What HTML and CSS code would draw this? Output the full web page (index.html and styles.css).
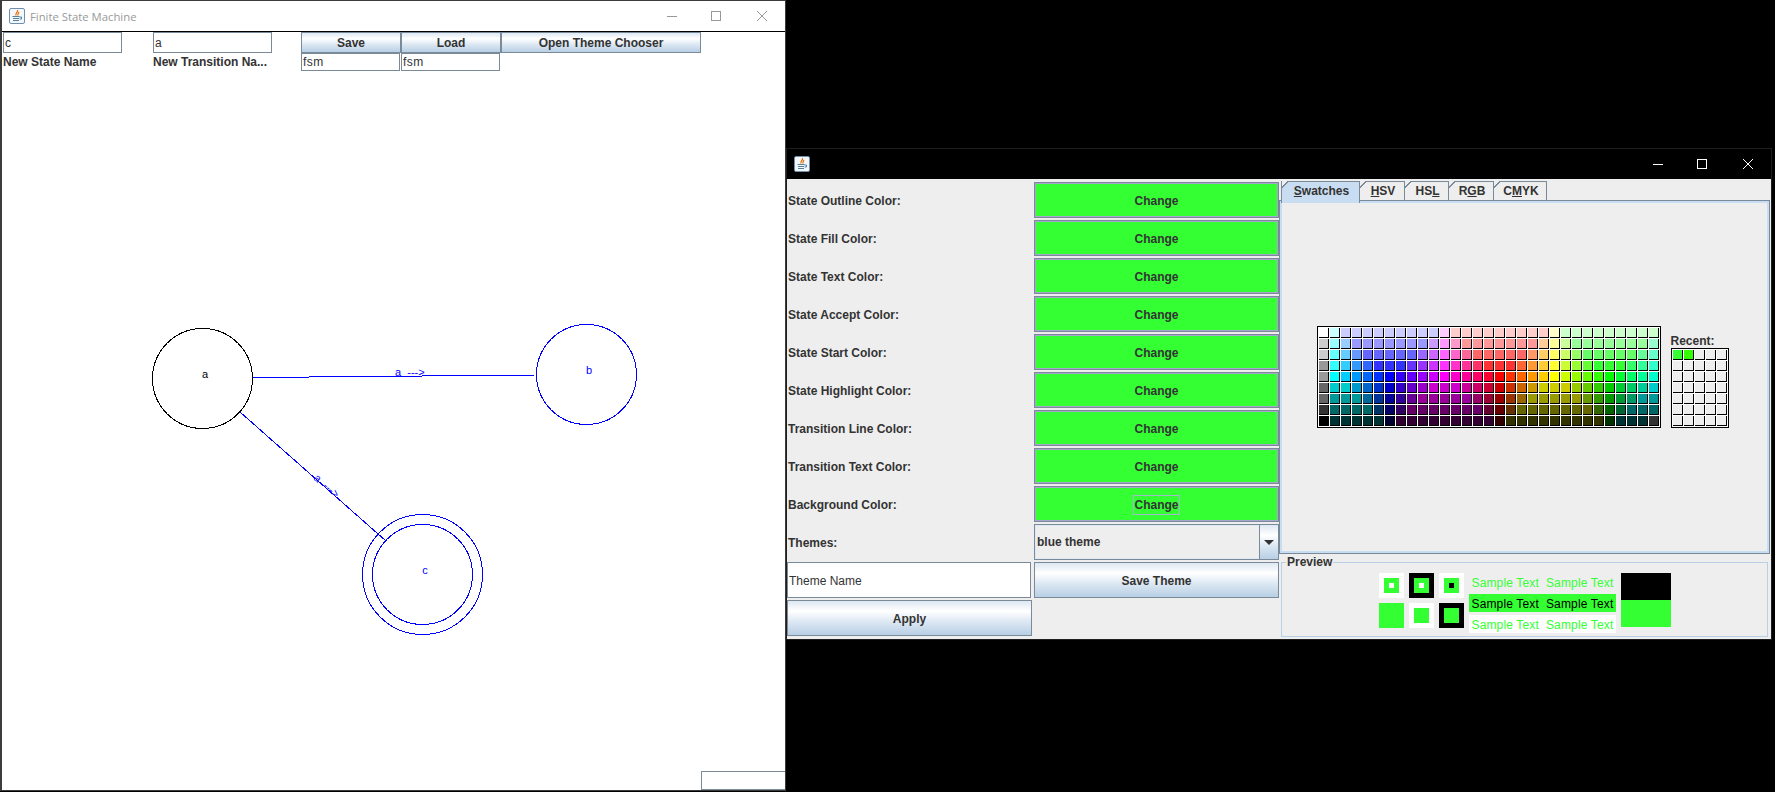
FILE: index.html
```html
<!DOCTYPE html>
<html lang="en">
<head>
    <meta charset="UTF-8">
    <meta name="viewport" content="width=device-width, initial-scale=1.0">
    <title>Finite State Machine</title>
    <link rel="stylesheet" href="styles.css">
</head>
<body>

<svg class="icon-defs" width="0" height="0">
    <symbol id="javaIcon" viewBox="0 0 16 16">
        <rect x="0.5" y="0.5" width="15" height="15" rx="1.5" fill="#f4f8fc" stroke="#6f8fae"/>
        <path d="M8.5 2 C9.5 4 6 5 7 7.5 M10 4 C9 5.5 8.5 6 9 7.5" fill="none" stroke="#e76f00" stroke-width="1.2"/>
        <path d="M3.5 8.5 H10.5 M4 10.5 H10 M4 12.5 H10 M10.5 9 H12.5 V11 H10.5" fill="none" stroke="#5382a1" stroke-width="1"/>
    </symbol>
</svg>

<!-- main window -->
<div class="window fsm-window">
    <div class="titlebar">
        <svg class="app-icon"><use href="#javaIcon"/></svg>
        <span class="title-text">Finite State Machine</span>
        <div class="win-controls">
            <svg class="win-btn" viewBox="0 0 10 10"><path d="M0 5.5 H10"/></svg>
            <svg class="win-btn" viewBox="0 0 10 10"><rect x="0.5" y="0.5" width="9" height="9"/></svg>
            <svg class="win-btn" viewBox="0 0 10 10"><path d="M0 0 L10 10 M10 0 L0 10"/></svg>
        </div>
    </div>

    <div class="fsm-body">
        <div class="toolbar">
            <input class="field field-top" type="text" value="c">
            <span></span>
            <input class="field field-top" type="text" value="a">
            <span></span>
            <button class="btn">Save</button>
            <button class="btn">Load</button>
            <button class="btn">Open Theme Chooser</button>

            <label class="label">New State Name</label>
            <span></span>
            <label class="label">New Transition Na...</label>
            <span></span>
            <input class="field field-small" type="text" value="fsm">
            <input class="field field-small" type="text" value="fsm">
        </div>

        <svg class="canvas" viewBox="2 71 783 700">
            <line x1="253" y1="377.5" x2="536" y2="375"/>
            <line x1="240" y1="412" x2="386" y2="541"/>
            <circle class="state-start" cx="202.5" cy="378.5" r="50"/>
            <circle cx="586.5" cy="374.5" r="50"/>
            <circle cx="422.5" cy="574.5" r="60"/>
            <circle cx="422.5" cy="574.5" r="50"/>
            <text class="state-start-text" x="205" y="378">a</text>
            <text x="589" y="374">b</text>
            <text x="425" y="574">c</text>
            <text class="edge-text" x="395" y="376">a  ---&gt;</text>
            <text class="edge-text" transform="translate(313 479) rotate(41)">a  ---&gt;</text>
        </svg>

        <div class="status-row">
            <input class="field status-field" type="text">
        </div>
    </div>
</div>

<!-- theme chooser window -->
<div class="window theme-window">
    <div class="titlebar titlebar-dark">
        <svg class="app-icon"><use href="#javaIcon"/></svg>
        <div class="win-controls">
            <svg class="win-btn" viewBox="0 0 10 10"><path d="M0 5.5 H10"/></svg>
            <svg class="win-btn" viewBox="0 0 10 10"><rect x="0.5" y="0.5" width="9" height="9"/></svg>
            <svg class="win-btn" viewBox="0 0 10 10"><path d="M0 0 L10 10 M10 0 L0 10"/></svg>
        </div>
    </div>

    <div class="theme-body">
        <div class="theme-form">
            <label class="label">State Outline Color:</label>
            <button class="btn-color">Change</button>
            <label class="label">State Fill Color:</label>
            <button class="btn-color">Change</button>
            <label class="label">State Text Color:</label>
            <button class="btn-color">Change</button>
            <label class="label">State Accept Color:</label>
            <button class="btn-color">Change</button>
            <label class="label">State Start Color:</label>
            <button class="btn-color">Change</button>
            <label class="label">State Highlight Color:</label>
            <button class="btn-color">Change</button>
            <label class="label">Transition Line Color:</label>
            <button class="btn-color">Change</button>
            <label class="label">Transition Text Color:</label>
            <button class="btn-color">Change</button>
            <label class="label">Background Color:</label>
            <button class="btn-color"><span class="focus-ring">Change</span></button>
            <label class="label">Themes:</label>
            <div class="combo">
                <span class="combo-value">blue theme</span>
                <span class="combo-arrow"></span>
            </div>
            <input class="field theme-name" type="text" value="Theme Name">
            <button class="btn btn-tall">Save Theme</button>
            <button class="btn btn-tall">Apply</button>
        </div>

        <div class="chooser">
            <div class="tabs">
                <div class="tab tab-active"><u>S</u>watches</div>
                <div class="tab"><u>H</u>SV</div>
                <div class="tab">HS<u>L</u></div>
                <div class="tab">R<u>G</u>B</div>
                <div class="tab">C<u>M</u>YK</div>
            </div>
            <div class="tab-panel">
                <div class="swatches" id="mainSwatches"></div>
                <div class="recent">
                    <div class="recent-label">Recent:</div>
                    <div class="swatches swatches-recent" id="recentSwatches"></div>
                </div>
            </div>

            <fieldset class="preview">
                <legend>Preview</legend>
                <div class="preview-squares">
                    <div class="sq sq-white"><div class="sq-mid"><div class="sq-dot"></div></div></div>
                    <div class="sq sq-black"><div class="sq-mid"><div class="sq-dot"></div></div></div>
                    <div class="sq sq-white"><div class="sq-mid"><div class="sq-dot sq-dot-black"></div></div></div>
                    <div class="sq sq-green"></div>
                    <div class="sq sq-white"><div class="sq-mid"></div></div>
                    <div class="sq sq-black"><div class="sq-mid"></div></div>
                </div>
                <div class="preview-text">
                    <div class="sample">Sample Text  Sample Text</div>
                    <div class="sample sample-green">Sample Text  Sample Text</div>
                    <div class="sample sample-white">Sample Text  Sample Text</div>
                </div>
                <div class="preview-block">
                    <div class="block-half block-black"></div>
                    <div class="block-half block-green"></div>
                </div>
            </fieldset>
        </div>
    </div>
</div>

<script src="swatches.js"></script>
</body>
</html>
```

FILE: styles.css
```css
* {
    box-sizing: border-box;
}

html, body {
    margin: 0;
    height: 792px;
    overflow: hidden;
    background-color: #000;
}

body {
    font-family: "Liberation Sans", Arial, sans-serif;
    font-size: 12px;
    color: #333;
}

.icon-defs {
    position: absolute;
}

.window {
    position: absolute;
    display: flex;
    flex-direction: column;
}

.fsm-window {
    left: 0;
    top: 0;
    width: 786px;
    height: 791px;
    background-color: #fff;
    border: 1px solid #3c3c3c;
    border-left-width: 2px;
}

.theme-window {
    left: 786px;
    top: 148px;
    width: 986px;
    height: 492px;
    background-color: #000;
    border: 1px solid #1e1e1e;
}

/* title bars */
.titlebar {
    display: flex;
    align-items: center;
    flex: none;
    height: 31px;
    padding-left: 7px;
    border-bottom: 1px solid #000;
    background-color: #fff;
}

.titlebar-dark {
    height: 30px;
    border-bottom: none;
    background-color: #000;
}

.app-icon {
    width: 16px;
    height: 16px;
    flex: none;
}

.title-text {
    margin-left: 5px;
    font-family: "Open Sans", sans-serif;
    font-size: 11.3px;
    color: #999;
}

.win-controls {
    display: flex;
    gap: 34px;
    margin-left: auto;
    padding-right: 18px;
}

.win-btn {
    width: 10px;
    height: 10px;
    fill: none;
    stroke: #999;
    stroke-width: 1;
}

.win-btn:last-child {
    margin-left: 2px;
}

.titlebar-dark .win-btn {
    stroke: #fff;
}

/* shared controls */
.label {
    display: flex;
    align-items: center;
    font-weight: bold;
    white-space: nowrap;
}

.field {
    min-width: 0;
    width: 100%;
    padding: 0 2px;
    border: 1px solid #7a8a99;
    border-radius: 0;
    outline: none;
    background-color: #fff;
    font-family: inherit;
    font-size: 12px;
    color: #333;
}

.btn {
    padding: 0;
    border: 1px solid #7a8a99;
    background: linear-gradient(#dde8f3 0, #fff 30%, #dde8f3 60%, #b8cfe5 100%);
    font-family: inherit;
    font-size: 12px;
    font-weight: bold;
    color: #333;
}

.btn-tall {
    padding-top: 2px;
}

.btn-color {
    padding: 2px 0 0;
    border: 1px solid #7a8a99;
    box-shadow: inset 0 0 0 1px #a5a5cf;
    background-color: #33ff33;
    font-family: inherit;
    font-size: 12px;
    font-weight: bold;
    color: #333;
}

.focus-ring {
    display: inline-block;
    padding: 2px 0;
    outline: 1px solid #a3b8cc;
}

/* main window */
.fsm-body {
    display: flex;
    flex-direction: column;
    flex: 1;
    min-height: 0;
}

.toolbar {
    display: grid;
    grid-template-columns: 119px 31px 119px 29px 100px 100px 200px;
    grid-template-rows: 21px 18px;
    padding-left: 1px;
    flex: none;
}

.field-top {
    padding: 0 1px;
}

.field-small {
    width: 99px;
    padding: 0 1px;
    letter-spacing: 0.5px;
}

.canvas {
    display: block;
    width: 783px;
    height: 700px;
    flex: none;
    fill: none;
    stroke: #00f;
    shape-rendering: crispEdges;
}

.canvas .state-start {
    stroke: #000;
}

.canvas text {
    fill: #00f;
    stroke: none;
    font-size: 11px;
    text-anchor: middle;
}

.canvas .state-start-text {
    fill: #000;
}

.canvas .edge-text {
    text-anchor: start;
    white-space: pre;
    font-size: 11px;
}

.status-row {
    display: flex;
    justify-content: flex-end;
    flex: none;
}

.status-field {
    width: 84px;
    height: 19px;
    border-right: none;
}

/* theme window */
.theme-body {
    display: flex;
    flex: 1;
    min-height: 0;
    background-color: #eee;
}

.theme-form {
    display: grid;
    grid-template-columns: 245px 245px;
    grid-auto-rows: 36px;
    column-gap: 2px;
    row-gap: 2px;
    align-content: start;
    flex: none;
    width: 492px;
    padding-top: 3px;
}

.theme-form .label {
    padding: 2px 0 0 1px;
}

.theme-name {
    width: 244px;
    height: 36px;
    padding: 2px 1px 0;
}

.combo {
    display: flex;
    border: 1px solid #7a8a99;
    box-shadow: inset 0 0 0 1px #dde8f3;
}

.combo-value {
    display: flex;
    align-items: center;
    flex: 1;
    padding-left: 2px;
    font-weight: bold;
}

.combo-arrow {
    position: relative;
    flex: none;
    width: 19px;
    border-left: 1px solid #7a8a99;
    background: linear-gradient(#dde8f3 0, #fff 30%, #dde8f3 60%, #b8cfe5 100%);
}

.combo-arrow::after {
    content: "";
    position: absolute;
    left: 4px;
    top: 15px;
    border-left: 5px solid transparent;
    border-right: 5px solid transparent;
    border-top: 5px solid #333;
}

/* colour chooser */
.chooser {
    display: flex;
    flex-direction: column;
    flex: 1;
    min-width: 0;
    padding-top: 2px;
}

.tabs {
    display: flex;
    flex: none;
    height: 19px;
    padding-left: 2px;
    position: relative;
    z-index: 1;
}

.tab {
    --tab-fill: #eee;
    display: flex;
    align-items: center;
    justify-content: center;
    height: 19px;
    padding-left: 2px;
    border-right: 1px solid #7a8a99;
    background:
        linear-gradient(#7a8a99, #7a8a99) 6px 0 / 100% 1px no-repeat,
        linear-gradient(135deg, transparent 4px, #7a8a99 4px, #7a8a99 5px, var(--tab-fill) 5px);
    font-weight: bold;
    white-space: nowrap;
}

.tab:nth-child(1) {
    width: 79px;
}

.tab:nth-child(2) {
    width: 45px;
}

.tab:nth-child(3) {
    width: 44px;
}

.tab:nth-child(4) {
    width: 45px;
}

.tab:nth-child(5) {
    width: 53px;
}

.tab-active {
    --tab-fill: #c8ddf2;
    height: 22px;
    padding-bottom: 3px;
    border-left: 1px solid #7a8a99;
}

.tab-panel {
    display: flex;
    align-items: flex-end;
    justify-content: center;
    flex: none;
    height: 354px;
    margin-right: 1px;
    padding: 0 4px 125px 0;
    border: 1px solid #7a8a99;
    box-shadow: inset 0 0 0 2px #c8ddf2;
}

.swatches {
    display: grid;
    grid-template-columns: repeat(31, 10px);
    gap: 1px;
    padding: 1px;
    border: 1px solid #000;
    background-color: #fff;
}

.swatches-recent {
    grid-template-columns: repeat(5, 10px);
}

.swatch {
    width: 10px;
    height: 10px;
    border-right: 1px solid #000;
    border-bottom: 1px solid #000;
}

.recent {
    margin-left: 10px;
}

.recent-label {
    margin-bottom: 0;
    font-weight: bold;
    line-height: 14px;
}

/* preview */
.preview {
    display: flex;
    justify-content: center;
    gap: 5px;
    flex: 1;
    min-width: 0;
    margin: 1px 3px 2px 2px;
    padding: 4px 0 0;
    border: 1px solid #b8cfe5;
}

.preview legend {
    margin-left: 4px;
    padding: 0 1px;
    font-weight: bold;
    line-height: 14px;
}

.preview-squares {
    display: grid;
    grid-template-columns: repeat(3, 25px);
    grid-auto-rows: 25px;
    gap: 5px;
}

.sq {
    display: flex;
    align-items: center;
    justify-content: center;
}

.sq-white {
    background-color: #fff;
}

.sq-black {
    background-color: #000;
}

.sq-green, .sq-mid {
    background-color: #33ff33;
}

.sq-mid {
    display: flex;
    align-items: center;
    justify-content: center;
    width: 15px;
    height: 15px;
}

.sq-dot {
    width: 5px;
    height: 5px;
    background-color: #fff;
}

.sq-dot-black {
    background-color: #000;
}

.preview-text {
    display: flex;
    flex-direction: column;
    gap: 3px;
    width: 147px;
}

.sample {
    height: 18px;
    padding-left: 3px;
    color: #33ff33;
    line-height: 20px;
    letter-spacing: 0.15px;
    white-space: pre;
}

.sample-green {
    background-color: #33ff33;
    color: #000;
}

.sample-white {
    background-color: #fff;
}

.preview-block {
    width: 50px;
}

.block-half {
    height: 27px;
}

.block-black {
    background-color: #000;
}

.block-green {
    background-color: #33ff33;
}
```

FILE: swatches.js
```js
// swatch table, "colour*count" means the colour repeats
const rows = [
    'ffffff ccffff ccccff*9 ffccff ffcccc*9 ffffcc ccffcc*9',
    'cccccc 99ffff 99ccff 9999ff*7 cc99ff ff99ff ff99cc ff9999*7 ffcc99 ffff99 ccff99 99ff99*7 99ffcc',
    'cccccc 66ffff 66ccff 6699ff 6666ff*5 9966ff cc66ff ff66ff ff66cc ff6699 ff6666*5 ff9966 ffcc66 ffff66 ccff66 99ff66 66ff66*5 66ff99 66ffcc',
    '999999 33ffff 33ccff 3399ff 3366ff 3333ff*3 6633ff 9933ff cc33ff ff33ff ff33cc ff3399 ff3366 ff3333*3 ff6633 ff9933 ffcc33 ffff33 ccff33 99ff33 66ff33 33ff33*3 33ff66 33ff99 33ffcc',
    '999999 00ffff 00ccff 0099ff 0066ff 0033ff 0000ff 3300ff 6600ff 9900ff cc00ff ff00ff ff00cc ff0099 ff0066 ff0033 ff0000 ff3300 ff6600 ff9900 ffcc00 ffff00 ccff00 99ff00 66ff00 33ff00 00ff00 00ff33 00ff66 00ff99 00ffcc',
    '666666 00cccc*2 0099cc 0066cc 0033cc 0000cc 3300cc 6600cc 9900cc cc00cc*3 cc0099 cc0066 cc0033 cc0000 cc3300 cc6600 cc9900 cccc00*3 99cc00 66cc00 33cc00 00cc00 00cc33 00cc66 00cc99 00cccc',
    '666666 009999*3 006699 003399 000099 330099 660099 990099*5 990066 990033 990000 993300 996600 999900*5 669900 339900 009900 009933 009966 009999*2',
    '333333 006666*4 003366 000066 330066 660066*7 660033 660000 663300 666600*7 336600 006600 006633 006666*3',
    '000000 003333*5 000033 330033*9 330000 333300*9 003300 003333*3 333333'
];

function addSwatch(parent, color) {
    const cell = document.createElement('div');
    cell.className = 'swatch';
    cell.style.backgroundColor = color;
    parent.appendChild(cell);
}

const mainSwatches = document.getElementById('mainSwatches');
rows.forEach((row) => {
    row.split(' ').forEach((item) => {
        const [color, count] = item.split('*');
        for (let i = 0; i < (count || 1); i++) {
            addSwatch(mainSwatches, '#' + color);
        }
    });
});

const recentSwatches = document.getElementById('recentSwatches');
for (let i = 0; i < 35; i++) {
    let color = '#eeeeee';
    if (i === 0) color = '#33ff33';
    if (i === 1) color = '#33ff00';
    addSwatch(recentSwatches, color);
}
```
